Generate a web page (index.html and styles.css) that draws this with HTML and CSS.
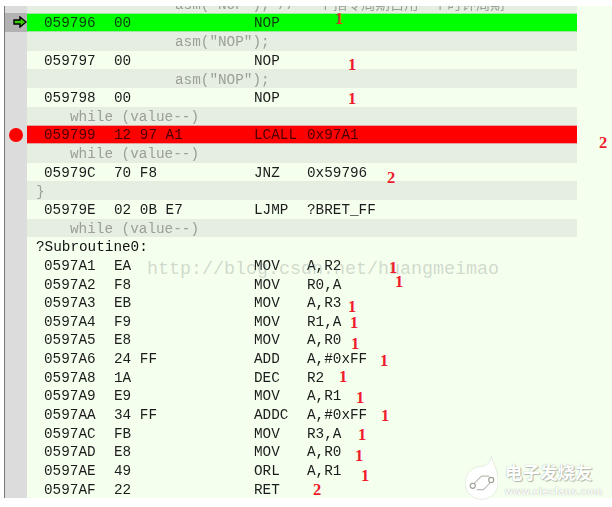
FILE: index.html
```html
<!DOCTYPE html>
<html lang="zh">
<head>
<meta charset="utf-8">
<title>Disassembly</title>
<link rel="stylesheet" href="styles.css">
</head>
<body>
<main class="window">
  <div class="listing">
    <div class="row clipped src"><div class="gut"></div><div class="line"><span class="s-asm">asm("NOP"); // 一个指令周期占用一个时钟周期</span></div></div>
    <div class="row cur"><div class="gut"><svg class="arrow" viewBox="0 0 14 12"><path d="M1 4h6V1l6 5-6 5V8H1z" fill="#3c0" stroke="#000" stroke-width="1.4"/></svg></div><div class="line"><span class="a">059796</span><span class="b">00</span><span class="m">NOP</span></div></div>
    <div class="row src"><div class="gut"></div><div class="line"><span class="s-asm">asm("NOP");</span></div></div>
    <div class="row"><div class="gut"></div><div class="line"><span class="a">059797</span><span class="b">00</span><span class="m">NOP</span></div></div>
    <div class="row src"><div class="gut"></div><div class="line"><span class="s-asm">asm("NOP");</span></div></div>
    <div class="row"><div class="gut"></div><div class="line"><span class="a">059798</span><span class="b">00</span><span class="m">NOP</span></div></div>
    <div class="row src"><div class="gut"></div><div class="line"><span class="s-while">while (value--)</span></div></div>
    <div class="row brk"><div class="gut"><span class="dot"></span></div><div class="line"><span class="a">059799</span><span class="b">12 97 A1</span><span class="m">LCALL</span><span class="o">0x97A1</span></div></div>
    <div class="row src"><div class="gut"></div><div class="line"><span class="s-while">while (value--)</span></div></div>
    <div class="row"><div class="gut"></div><div class="line"><span class="a">05979C</span><span class="b">70 F8</span><span class="m">JNZ</span><span class="o">0x59796</span></div></div>
    <div class="row src"><div class="gut"></div><div class="line"><span class="s-top">}</span></div></div>
    <div class="row"><div class="gut"></div><div class="line"><span class="a">05979E</span><span class="b">02 0B E7</span><span class="m">LJMP</span><span class="o">?BRET_FF</span></div></div>
    <div class="row src"><div class="gut"></div><div class="line"><span class="s-while">while (value--)</span></div></div>
    <div class="row"><div class="gut"></div><div class="line"><span class="s-top label">?Subroutine0:</span></div></div>
    <div class="row"><div class="gut"></div><div class="line"><span class="a">0597A1</span><span class="b">EA</span><span class="m">MOV</span><span class="o">A,R2</span></div></div>
    <div class="row"><div class="gut"></div><div class="line"><span class="a">0597A2</span><span class="b">F8</span><span class="m">MOV</span><span class="o">R0,A</span></div></div>
    <div class="row"><div class="gut"></div><div class="line"><span class="a">0597A3</span><span class="b">EB</span><span class="m">MOV</span><span class="o">A,R3</span></div></div>
    <div class="row"><div class="gut"></div><div class="line"><span class="a">0597A4</span><span class="b">F9</span><span class="m">MOV</span><span class="o">R1,A</span></div></div>
    <div class="row"><div class="gut"></div><div class="line"><span class="a">0597A5</span><span class="b">E8</span><span class="m">MOV</span><span class="o">A,R0</span></div></div>
    <div class="row"><div class="gut"></div><div class="line"><span class="a">0597A6</span><span class="b">24 FF</span><span class="m">ADD</span><span class="o">A,#0xFF</span></div></div>
    <div class="row"><div class="gut"></div><div class="line"><span class="a">0597A8</span><span class="b">1A</span><span class="m">DEC</span><span class="o">R2</span></div></div>
    <div class="row"><div class="gut"></div><div class="line"><span class="a">0597A9</span><span class="b">E9</span><span class="m">MOV</span><span class="o">A,R1</span></div></div>
    <div class="row"><div class="gut"></div><div class="line"><span class="a">0597AA</span><span class="b">34 FF</span><span class="m">ADDC</span><span class="o">A,#0xFF</span></div></div>
    <div class="row"><div class="gut"></div><div class="line"><span class="a">0597AC</span><span class="b">FB</span><span class="m">MOV</span><span class="o">R3,A</span></div></div>
    <div class="row"><div class="gut"></div><div class="line"><span class="a">0597AD</span><span class="b">E8</span><span class="m">MOV</span><span class="o">A,R0</span></div></div>
    <div class="row"><div class="gut"></div><div class="line"><span class="a">0597AE</span><span class="b">49</span><span class="m">ORL</span><span class="o">A,R1</span></div></div>
    <div class="row"><div class="gut"></div><div class="line"><span class="a">0597AF</span><span class="b">22</span><span class="m">RET</span></div></div>
  </div>

  <div class="watermark">http://blog.csdn.net/huangmeimao</div>

  <span class="note n1">1</span>
  <span class="note n2">1</span>
  <span class="note n3">1</span>
  <span class="note n4">2</span>
  <span class="note n5">2</span>
  <span class="note n6">1</span>
  <span class="note n7">1</span>
  <span class="note n8">1</span>
  <span class="note n9">1</span>
  <span class="note n10">1</span>
  <span class="note n11">1</span>
  <span class="note n12">1</span>
  <span class="note n13">1</span>
  <span class="note n14">1</span>
  <span class="note n15">1</span>
  <span class="note n16">1</span>
  <span class="note n17">1</span>
  <span class="note n18">2</span>

  <div class="logo">
    <svg class="logo-mark" viewBox="0 0 34 48">
      <path d="M27 0c1 7 7 13 7 26a17 17 0 1 1-17-15c6-1 10-5 10-11z" fill="#fff" stroke="#dfe6da" stroke-width="0.8"/>
      <path d="M8 30 L17 21 H25 M12 35 H19 L27 27" fill="none" stroke="#b9bfb5" stroke-width="1.2"/>
      <circle cx="8" cy="31" r="2.6" fill="#fff" stroke="#9aa096" stroke-width="1.2"/>
      <circle cx="27" cy="25" r="2.6" fill="#fff" stroke="#9aa096" stroke-width="1.2"/>
    </svg>
    <div class="logo-text">
      <span class="logo-cn">电子发烧友</span>
      <span class="logo-en">www.elecfans.com</span>
    </div>
  </div>
</main>
</body>
</html>
```
FILE: styles.css
```css
* { box-sizing: border-box; }
html, body { margin: 0; padding: 0; background: #fff; }
body { width: 612px; height: 507px; overflow: hidden; }

.window {
  position: relative;
  width: 612px;
  height: 507px;
  padding-top: 6px;
  font: 14.33px/18.67px "Liberation Mono", "Noto Sans CJK SC", monospace;
  color: #1c1c1c;
}

.listing {
  margin-left: 4px;
  height: 492px;
  overflow: hidden;
  background: #f4ffee;
  border-left: 1px solid #777;
  filter: blur(0.35px);
}

.row { display: flex; height: 18.67px; }
.row.clipped { margin-top: -11.33px; }

.gut {
  flex: none;
  width: 22px;
  height: 100%;
  background: #dcdcdc;
  display: flex;
  align-items: center;
  justify-content: center;
}

.line {
  flex: none;
  width: 550px;
  padding-top: 1px;
  display: flex;
  white-space: pre;
}

.src .line { background: #e5eee0; color: #9a9f98; padding-top: 1.5px; }
.cur .line { background: #00ff00; border-block: 1px solid #9fe89f; color: #0d3a0d; line-height: 16.67px; padding-top: 1px; }
.cur .gut { background: #b2b2b2; }
.brk .line { background: #ff0000; border-block: 1px solid #e6a0a0; color: #4a0000; line-height: 16.67px; padding-top: 1px; }

.a { width: 70px; margin-left: 17px; flex: none; }
.b { width: 140px; flex: none; }
.m { width: 53px; flex: none; }
.o { flex: none; }

.s-asm { margin-left: 148px; }
.s-while { margin-left: 43px; }
.s-top { margin-left: 9px; }
.label { color: #111; }

.arrow { width: 14px; height: 12px; margin-left: 8px; margin-top: -2px; }
.dot { width: 14px; height: 14px; border-radius: 50%; background: #f00; margin-right: 1px; }

.watermark {
  position: absolute;
  left: 147px;
  top: 259px;
  font: 18.33px/22px "Liberation Mono", monospace;
  color: rgba(120, 125, 120, 0.3);
  white-space: nowrap;
}

.note {
  position: absolute;
  font: 700 16.5px/16px "Liberation Serif", serif;
  color: #f01c2c;
  width: 10px;
  text-align: center;
}
.n1  { left: 334px; top: 11px; color: #d9352a; }
.n2  { left: 347px; top: 57px; }
.n3  { left: 347px; top: 91px; }
.n4  { left: 598px; top: 135px; }
.n5  { left: 386px; top: 170px; }
.n6  { left: 388px; top: 260px; }
.n7  { left: 394px; top: 274px; }
.n8  { left: 347px; top: 299px; }
.n9  { left: 349px; top: 315px; }
.n10 { left: 350px; top: 336px; }
.n11 { left: 379px; top: 353px; }
.n12 { left: 338px; top: 369px; }
.n13 { left: 355px; top: 390px; }
.n14 { left: 380px; top: 408px; }
.n15 { left: 357px; top: 427px; }
.n16 { left: 354px; top: 448px; }
.n17 { left: 360px; top: 468px; }
.n18 { left: 312px; top: 482px; }

.logo {
  position: absolute;
  left: 465px;
  top: 455px;
  display: flex;
  gap: 7px;
}
.logo-mark { width: 33px; height: 48px; flex: none; }
.logo-text { display: flex; flex-direction: column; padding-top: 6px; }
.logo-cn {
  font: 700 17.5px/22px "Noto Sans CJK SC", sans-serif;
  color: #fff;
  text-shadow: 0 0 1px #9aa396, 1px 1px 1px #b5bcb0;
  white-space: nowrap;
}
.logo-en {
  font: 700 10.2px/13px "Liberation Sans", sans-serif;
  letter-spacing: 0.45px;
  margin-top: 2px;
  color: #fff;
  text-shadow: 0 0 1px #9aa396;
  white-space: nowrap;
}
```
